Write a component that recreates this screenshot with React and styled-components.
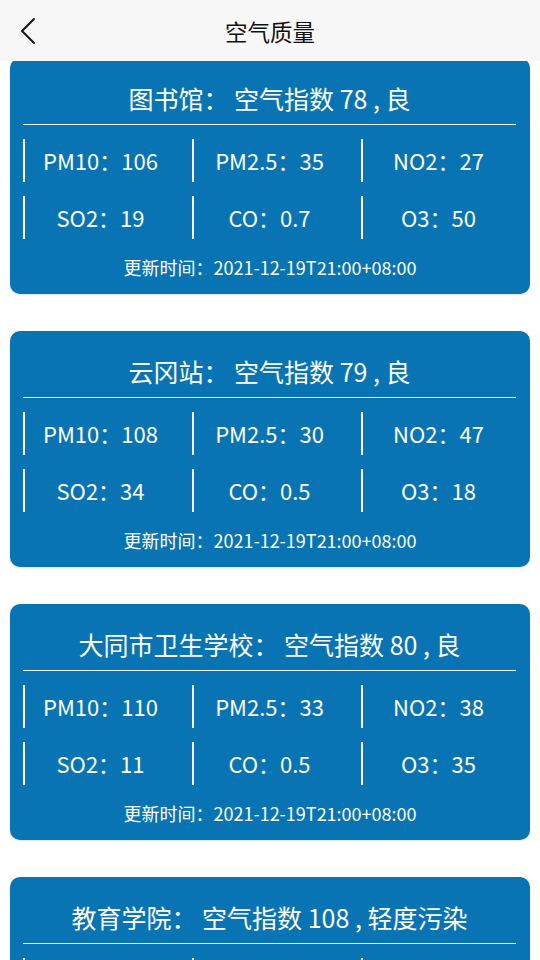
import React from 'react';
import styled, { createGlobalStyle } from 'styled-components';

const GlobalStyle = createGlobalStyle`
  html, body {
    margin: 0;
    padding: 0;
    background: #ffffff;
    font-family: "Noto Sans CJK SC", "Noto Sans", sans-serif;
  }
`;

const stations = [
  {
    name: '图书馆',
    aqi: 78,
    level: '良',
    values: { PM10: 106, 'PM2.5': 35, NO2: 27, SO2: 19, CO: 0.7, O3: 50 },
  },
  {
    name: '云冈站',
    aqi: 79,
    level: '良',
    values: { PM10: 108, 'PM2.5': 30, NO2: 47, SO2: 34, CO: 0.5, O3: 18 },
  },
  {
    name: '大同市卫生学校',
    aqi: 80,
    level: '良',
    values: { PM10: 110, 'PM2.5': 33, NO2: 38, SO2: 11, CO: 0.5, O3: 35 },
  },
  {
    name: '教育学院',
    aqi: 108,
    level: '轻度污染',
    values: { PM10: 138, 'PM2.5': 46, NO2: 41, SO2: 21, CO: 0.8, O3: 26 },
  },
];

const keys = ['PM10', 'PM2.5', 'NO2', 'SO2', 'CO', 'O3'];

// Top bar, fixed over the scrolled list

const Header = styled.header`
  position: fixed;
  top: 0;
  left: 0;
  right: 0;
  height: 61px;
  background: #f7f7f7;
  display: flex;
  align-items: center;
  justify-content: center;
  z-index: 10;
`;

const BackButton = styled.button`
  position: absolute;
  left: 16px;
  top: 17px;
  width: 26px;
  height: 28px;
  padding: 0;
  border: none;
  background: transparent;
  display: flex;
  align-items: center;
  justify-content: center;
`;

const Title = styled.h1`
  margin: 0;
  font-size: 22.5px;
  font-weight: 400;
  color: #111111;
`;

const List = styled.main`
  display: flex;
  flex-direction: column;
  gap: 37px;
  padding: 58px 10px 40px;
`;

const Card = styled.section`
  background: #0874b3;
  border-radius: 10px;
  box-shadow: 0 1px 2px rgba(0, 0, 0, 0.12);
  color: #ffffff;
  padding: 25px 0 15px;
`;

const CardTitle = styled.h2`
  margin: 0 14px 0 13px;
  padding-bottom: 11px;
  border-bottom: 1.5px solid #eaf4fb;
  font-size: 25px;
  font-weight: 400;
  line-height: 30px;
  text-align: center;
  white-space: pre;
`;

const Grid = styled.div`
  display: grid;
  grid-template-columns: repeat(3, 1fr);
  row-gap: 14px;
  margin: 14px 0 0 13px;
`;

const Cell = styled.div`
  border-left: 2px solid #ffffff;
  height: 43px;
  padding-right: 16px;
  line-height: 43px;
  text-align: center;
  font-size: 22px;
`;

const UpdateTime = styled.div`
  margin-top: 16px;
  line-height: 24px;
  text-align: center;
  font-size: 18px;
`;

const App = () => {
  return (
    <>
      <GlobalStyle />
      <Header>
        <BackButton aria-label="返回">
          <svg width="16" height="28" viewBox="0 0 16 28" fill="none">
            <polyline
              points="13,2 1,14 13,26"
              stroke="#161616"
              strokeWidth="2"
              strokeLinecap="round"
              strokeLinejoin="round"
            />
          </svg>
        </BackButton>
        <Title>空气质量</Title>
      </Header>
      <List>
        {stations.map((s) => (
          <Card key={s.name}>
            <CardTitle>{`${s.name}： 空气指数 ${s.aqi} , ${s.level}`}</CardTitle>
            <Grid>
              {keys.map((k) => (
                <Cell key={k}>{`${k}：${s.values[k]}`}</Cell>
              ))}
            </Grid>
            <UpdateTime>更新时间：2021-12-19T21:00+08:00</UpdateTime>
          </Card>
        ))}
      </List>
    </>
  );
};

export default App;
